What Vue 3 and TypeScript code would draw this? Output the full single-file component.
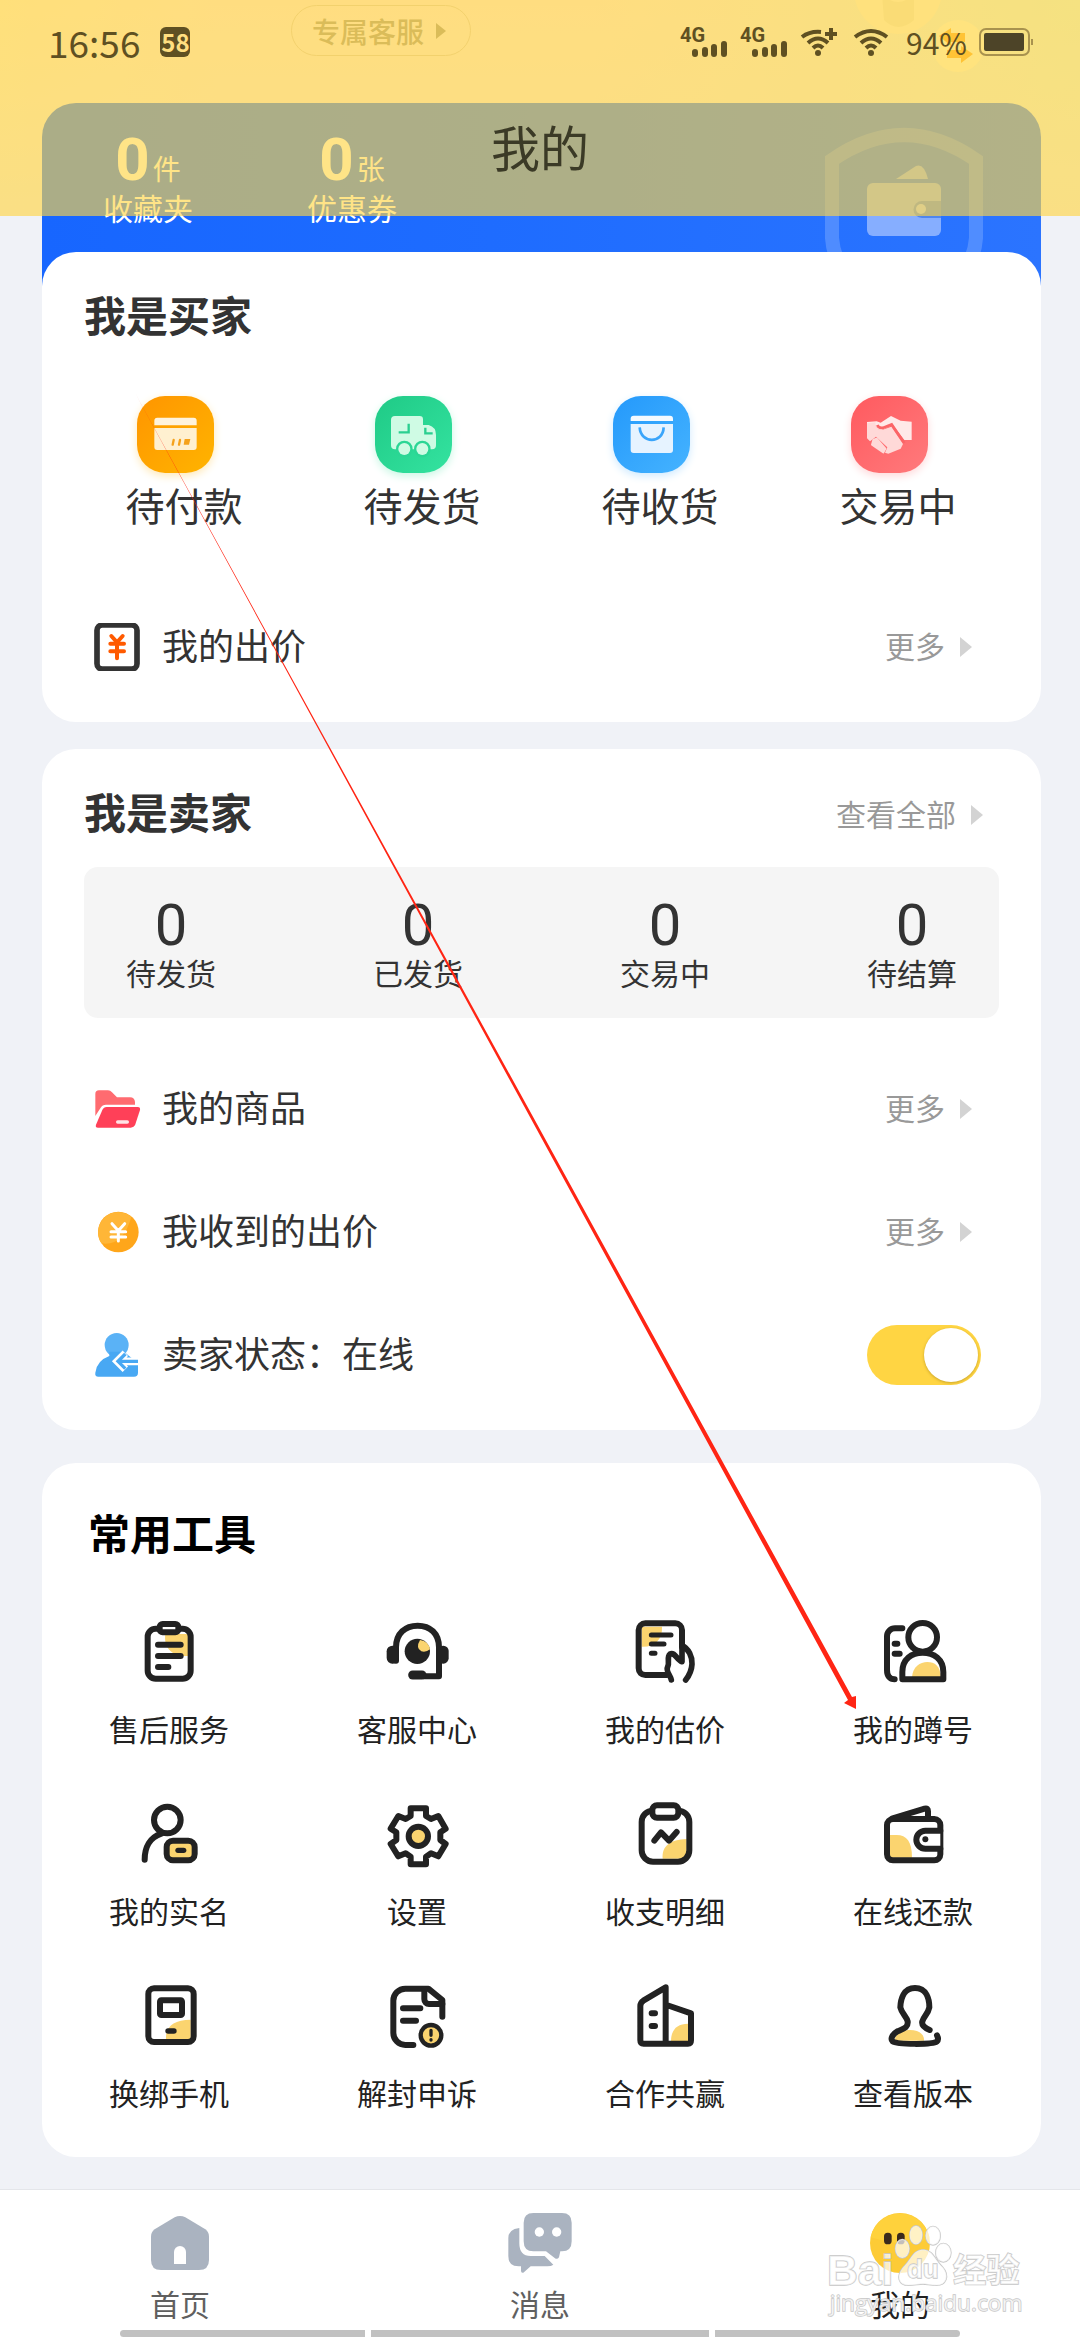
<script setup lang="ts">
import { ref } from 'vue'

interface Icon {
  label: string
  box: string
  art: string
}

const assets = [
  { count: 0, unit: '件', label: '收藏夹' },
  { count: 0, unit: '张', label: '优惠券' },
]

const orders: (Icon & { from: string; to: string; glow: string })[] = [
  {
    label: '待付款', from: '#ff9500', to: '#ffb400', glow: '#ffe9b8', box: '231 78 231 231',
    art: '<path d="M283 166V152q0-9 9-9H401q9 0 9 9V166Z" fill="#fff3dc"/><path d="M283 174H410V231q0 9-9 9H292q-9 0-9-9Z" fill="#fff0d0"/><path d="M341 210l-3 14M360 210l-3 14" stroke="#f5a21b" stroke-width="7" stroke-linecap="round"/><path d="M374 207H391L387 224H371Z" fill="#f5a21b"/>',
  },
  {
    label: '待发货', from: '#1fca86', to: '#34e3a0', glow: '#c9f7e4', box: '945 78 231 231',
    art: '<path d="M1005 138H1079q10 0 10 10V165H1106q22 6 22 30V226q0 12-12 12H1005q-12 0-12-12V150q0-12 12-12Z" fill="#cffbe4"/><circle cx="1033" cy="237" r="25" fill="#2bd695"/><circle cx="1087" cy="237" r="25" fill="#2bd695"/><circle cx="1033" cy="237" r="18" fill="#cffbe4"/><circle cx="1087" cy="237" r="18" fill="#cffbe4"/><path d="M1016 187H1046V161M1096 173V190H1118" fill="none" stroke="#2bcf90" stroke-width="7"/>',
  },
  {
    label: '待收货', from: '#2499fb', to: '#45b3ff', glow: '#cfeaff', box: '158 78 231 231',
    art: '<path d="M211 153V146q0-9 9-9H329q9 0 9 9V153Z" fill="#f4faff"/><path d="M211 162H338V240q0 9-9 9H220q-9 0-9-9Z" fill="#e6f3ff"/><path d="M238 172C241 222 308 222 310 172" fill="none" stroke="#3aa5fb" stroke-width="8"/>',
  },
  {
    label: '交易中', from: '#ff5a5f', to: '#ff7a7c', glow: '#ffd9da', box: '873 78 231 231',
    art: '<path d="M921 156L950 154L962 158L993 138L1022 152L1055 155V210H1033L998 164L965 180Q948 180 946 166L921 185Z" fill="#ffe9e8"/><path d="M921 160L946 157Q946 180 966 180L994 170L1029 222L1022 236L985 251L975 248L982 232L948 200L930 214L921 205Z" fill="#ffd9d8"/><path d="M940 210L950 206L976 236L970 247L936 224Z" fill="#ffd9d8" stroke="#ffd9d8" stroke-width="6" stroke-linejoin="round"/><path d="M952 165Q956 176 970 173L995 163L1033 219" fill="none" stroke="#fb6567" stroke-width="8"/>',
  },
]

const bidIcon =
  '<rect x="111" y="765" width="120" height="132" rx="16" fill="none" stroke="#333" stroke-width="17"/><path d="M154 798L171 817L188 798M171 817V865M151 821H192M151 844H192" fill="none" stroke="#ff5a00" stroke-width="12" stroke-linecap="round"/>'

const counters = ['待发货', '已发货', '交易中', '待结算']

const sellerLinks: Icon[] = [
  {
    label: '我的商品', box: '99 105 144 144',
    art: '<path d="M106 198V132q0-11 11-11H144q7 0 12 6L171 142H210q14 0 15 14V164H138q-11 0-16 9Z" fill="#ff6b70"/><path d="M140 171H233q9 0 7 9L226 223q-4 10-14 10H114q-9 0-6-9L127 180q4-9 13-9Z" fill="#ff4058"/><path d="M173 216H202" stroke="#ffe3e5" stroke-width="10" stroke-linecap="round"/>',
  },
  {
    label: '我收到的出价', box: '99 474 144 144',
    art: '<circle cx="175" cy="546" r="61" fill="#ffa61a"/><path d="M114 546a61 61 0 0 1 100-46Q190 590 124 580Q114 566 114 546" fill="#ffb637"/><path d="M156 521L175 542L194 521M175 542V573M153 545H197M153 561H197" fill="none" stroke="#fff" stroke-width="9" stroke-linecap="round"/>',
  },
]

const onlineIcon =
  '<circle cx="170" cy="885" r="36" fill="#5ab2f6"/><path d="M148 905H192L234 940V968q0 12-12 12H115q-11 0-9-12Q110 932 148 918Z" fill="#48a8f3"/><path d="M236 934H176M196 910L172 934L196 958" fill="none" stroke="#fff" stroke-width="23"/><path d="M234 934H178M196 912L174 934L196 956" fill="none" stroke="#48a8f3" stroke-width="10"/>'

const tools: Icon[] = [
  {
    label: '售后服务', box: '219 78 216 216',
    art: '<path d="M316 132H386V198H372C336 198 310 172 316 132Z" fill="#fbd46f" stroke="none"/><rect x="263" y="116" width="129" height="150" rx="24"/><rect x="299" y="102" width="56" height="25" rx="9" fill="#fff"/><path d="M294 164H362M294 198H362M294 231H325"/>',
  },
  {
    label: '客服中心', box: '963 78 216 216',
    art: '<path d="M1008 212V172C1008 130 1036 107 1073 107S1137 130 1137 172V259H1092"/><path d="M1058 255H1086" stroke-width="27"/><rect x="980" y="167" width="36" height="54" rx="17" fill="#222" stroke="none"/><rect x="1133" y="167" width="33" height="54" rx="16" fill="#222" stroke="none"/><circle cx="1072" cy="184" r="38" fill="#222" stroke="none"/><path d="M1080 150Q1106 154 1110 178Q1098 188 1084 184Q1066 174 1080 150Z" fill="#fbd46f" stroke="none"/>',
  },
  {
    label: '我的估价', box: '207 78 216 216',
    art: '<path d="M245 110H306C308 148 284 172 245 170Z" fill="#fbd46f" stroke="none"/><path d="M320 255H256a20 20 0 0 1-20-20V120a20 20 0 0 1 20-20H346a20 20 0 0 1 20 20V170"/><path d="M274 135H333M274 162H312M274 190H285" stroke-width="15"/><path d="M334 270C332 256 316 244 323 230C330 216 319 202 330 192C344 184 352 212 366 215V166C386 176 397 200 396 222C395 244 388 256 377 270" stroke-width="17"/>',
  },
  {
    label: '我的蹲号', box: '951 78 216 216',
    art: '<path d="M1056 262C1058 230 1080 216 1102 216S1142 228 1142 262Z" fill="#fbd46f" stroke="none"/><circle cx="1088" cy="142" r="43"/><path d="M1027 268V246C1027 207 1055 188 1088 188S1150 207 1150 246V268Z"/><path d="M1027 115H1005a24 24 0 0 0-24 24V240c0 18 8 28 23 28M1004 161H1012M1004 191H1019"/>',
  },
  {
    label: '我的实名', box: '219 624 216 216',
    art: '<circle cx="322" cy="690" r="40"/><path d="M304 731C270 742 254 772 254 809"/><rect x="320" y="752" width="84" height="59" rx="19" fill="#fbd46f"/><path d="M354 781H371" stroke-width="16"/>',
  },
  {
    label: '设置', box: '963 624 216 216',
    art: '<path d="M1052 655H1098V678L1113 687L1135 678L1157 716L1141 727V750L1157 762L1135 799L1113 790L1098 800V823H1052V800L1037 790L1015 799L992 762L1009 750V727L992 716L1015 678L1037 687L1052 678Z"/><circle cx="1075" cy="739" r="29" fill="#fbd46f"/>',
  },
  {
    label: '收支明细', box: '207 624 216 216',
    art: '<path d="M308 806C304 770 330 748 380 747V806Z" fill="#fbd46f" stroke="none"/><rect x="245" y="662" width="143" height="153" rx="34"/><rect x="277" y="646" width="78" height="37" rx="14" fill="#fff"/><path d="M283 752L303 727L327 752L350 726"/>',
  },
  {
    label: '在线还款', box: '951 624 216 216',
    art: '<path d="M989 735H1010C1040 735 1056 755 1056 803H989Z" fill="#fbd46f" stroke="none"/><rect x="981" y="687" width="160" height="124" rx="18"/><path d="M998 685L1094 656Q1104 653 1104 664V685"/><path d="M1141 722H1096a27 27 0 0 0 0 54H1141" fill="#fff"/><circle cx="1096" cy="748" r="9" fill="#222" stroke="none"/>',
  },
  {
    label: '换绑手机', box: '219 90 216 216',
    art: '<path d="M318 268C316 230 340 210 392 209V268Z" fill="#fbd46f" stroke="none"/><rect x="265" y="115" width="136" height="161" rx="17"/><rect x="300" y="151" width="66" height="44" rx="4"/><path d="M324 243H342" stroke-width="16"/>',
  },
  {
    label: '解封申诉', box: '963 90 216 216',
    art: '<path d="M1060 285H1036a36 36 0 0 1-36-36V152a36 36 0 0 1 36-36H1105L1147 150V200"/><path d="M1093 118V148a14 14 0 0 0 14 14H1147M1029 175H1081M1029 212H1068"/><circle cx="1113" cy="256" r="31" fill="#fbd46f" stroke-width="13"/><path d="M1113 241V256M1113 269V270" stroke-width="10"/>',
  },
  {
    label: '合作共赢', box: '207 90 216 216',
    art: '<path d="M333 274C333 240 350 221 384 221V274Z" fill="#fbd46f" stroke="none"/><path d="M317 281V112L250 152Q241 158 241 168V271Q241 281 251 281H384Q393 281 393 271V190L320 165M275 190H285M275 228H285"/>',
  },
  {
    label: '查看版本', box: '951 90 216 216',
    art: '<path d="M1004 272C1006 246 1030 240 1050 240C1078 240 1094 255 1092 272Z" fill="#fbd46f" stroke="none"/><path d="M1109 240C1090 232 1085 222 1087 214C1092 198 1104 192 1108 172C1108 148 1100 114 1065 114S1022 148 1021 172C1025 190 1040 200 1043 214C1045 234 1030 236 1012 244C998 252 990 266 998 274C1012 284 1118 284 1130 275C1136 270 1134 262 1131 256"/>',
  },
]

const tabs: Icon[] = [
  {
    label: '首页', box: '261 777 198 198',
    art: '<path d="M344 802Q360 794 376 802L436 838Q447 846 447 860V930Q447 960 417 960H303Q273 960 273 930V860Q273 846 284 838Z" fill="#aab3c0"/><path d="M342 942V906a18 18 0 0 1 36 0V942Z" fill="#fff"/>',
  },
  {
    label: '消息', box: '1341 777 198 198',
    art: '<path d="M1378 834V880Q1378 918 1412 918H1454L1480 944Q1474 949 1462 949H1412L1390 968Q1383 970 1383 962V949H1376Q1345 949 1345 918V864Q1345 838 1378 834Z" fill="#aab3c0"/><path d="M1420 789H1506Q1535 789 1535 818V874Q1535 904 1506 904H1501L1497 922Q1492 930 1484 924L1458 904H1420Q1391 904 1391 874V818Q1391 789 1420 789Z" fill="#aab3c0"/><circle cx="1438" cy="846" r="14" fill="#fff"/><circle cx="1490" cy="846" r="14" fill="#fff"/>',
  },
  {
    label: '我的', box: '921 777 198 198',
    art: '<circle cx="1020" cy="879" r="90" fill="#fdcb36"/><path d="M932 862a90 90 0 0 1 176 0Q1060 900 932 862Z" fill="#ffd23c"/><rect x="972" y="848" width="23" height="35" rx="11" fill="#3a2a1c"/><rect x="1011" y="848" width="23" height="35" rx="11" fill="#3a2a1c"/>',
  },
]

const online = ref(true)
const activeTab = ref('我的')
</script>

<template>
  <div class="page">
    <header class="topbar">
      <div class="status">
        <div class="status-group">
          <span class="clock">16:56</span>
          <span class="temp">58</span>
        </div>
        <div class="status-group">
          <svg v-for="n in 2" :key="n" class="signal" viewBox="0 0 48 32">
            <text x="0" y="16">4G</text>
            <path d="M15 26V28M25 24V28M34 21V28M44 18V28" />
          </svg>
          <svg class="wifi" viewBox="0 0 38 32">
            <path d="M2 11Q10 5 21 6M8 17Q18 8 28 17M13 22Q18 17 23 22M31 2V14M25 8H37" />
            <circle cx="18" cy="27" r="3" />
          </svg>
          <svg class="wifi" viewBox="0 0 38 32">
            <path d="M2 11Q18 -1 34 11M8 17Q18 8 28 17M13 22Q18 17 23 22" />
            <circle cx="18" cy="27" r="3" />
          </svg>
          <span class="level">94%</span>
          <svg class="battery" viewBox="0 0 54 28">
            <rect x="1" y="1" width="49" height="26" rx="6" />
            <rect class="charge" x="5" y="5" width="40" height="18" rx="2" />
            <path d="M53 11V17" />
          </svg>
        </div>
      </div>
      <h1>我的</h1>
    </header>

    <main>
      <div class="hero">
        <svg class="mascot" viewBox="0 0 190 84" aria-hidden="true">
          <circle cx="69" cy="-10" r="44" fill="#fff6e2" />
          <path d="M53 -6Q69 10 85 -6V20Q69 34 55 20Z" fill="#f1e9cf" />
          <circle cx="129" cy="46" r="26" fill="#fffbe6" />
          <path d="M110 36L122 28V33H136V42H122V46ZM144 54L132 46V50H118V58H132V63Z" fill="#ffa51e" />
        </svg>
        <button type="button" class="service">专属客服<i class="tri"></i></button>
      </div>

      <section class="assets">
        <dl>
          <div v-for="a in assets" :key="a.label" class="asset">
            <dd><b>{{ a.count }}</b>{{ a.unit }}</dd>
            <dt>{{ a.label }}</dt>
          </div>
        </dl>
        <svg class="shield" viewBox="820 120 170 180" aria-hidden="true">
          <path d="M832 160Q904 110 976 160V238Q972 290 904 300Q836 290 832 238Z" fill="none" stroke="#6a9fff" stroke-opacity=".6" stroke-width="14" />
          <path d="M896 179L916 166Q924 163 928 179Z" fill="#86aeff" />
          <rect x="867" y="183" width="74" height="53" rx="6" fill="#86aeff" />
          <path d="M941 201H922a8 8 0 0 0 0 17H941Z" fill="#4f86ee" />
          <circle cx="921" cy="209" r="5" fill="#a9c6ff" />
        </svg>
      </section>

      <section class="card buyer">
        <h2>我是买家</h2>
        <div class="orders">
          <a v-for="o in orders" :key="o.label" href="#" class="order">
            <span class="tile" :style="{ background: `linear-gradient(135deg, ${o.from}, ${o.to})`, boxShadow: `0 3px 8px ${o.glow}` }">
              <svg :viewBox="o.box" v-html="o.art"></svg>
            </span>
            {{ o.label }}
          </a>
        </div>
        <div class="row">
          <svg class="row-icon" viewBox="99 759 144 144" v-html="bidIcon"></svg>
          <span class="row-label">我的出价</span>
          <a href="#" class="more">更多<i class="tri"></i></a>
        </div>
      </section>

      <section class="card seller">
        <div class="card-head">
          <h2>我是卖家</h2>
          <a href="#" class="more">查看全部<i class="tri"></i></a>
        </div>
        <dl class="counters">
          <div v-for="c in counters" :key="c">
            <dd>0</dd>
            <dt>{{ c }}</dt>
          </div>
        </dl>
        <div v-for="l in sellerLinks" :key="l.label" class="row">
          <svg class="row-icon" :viewBox="l.box" v-html="l.art"></svg>
          <span class="row-label">{{ l.label }}</span>
          <a href="#" class="more">更多<i class="tri"></i></a>
        </div>
        <div class="row">
          <svg class="row-icon" viewBox="99 843 144 144" v-html="onlineIcon"></svg>
          <label class="row-label" for="online">卖家状态：{{ online ? '在线' : '离线' }}</label>
          <input id="online" v-model="online" type="checkbox" role="switch" class="switch" />
        </div>
      </section>

      <section class="card tools">
        <h2>常用工具</h2>
        <div class="tool-grid">
          <a v-for="t in tools" :key="t.label" href="#" class="tool">
            <svg :viewBox="t.box" v-html="t.art"></svg>
            {{ t.label }}
          </a>
        </div>
      </section>
    </main>

    <nav class="tabs">
      <a v-for="t in tabs" :key="t.label" href="#" class="tab" :class="{ active: t.label === activeTab }" @click.prevent="activeTab = t.label">
        <svg :viewBox="t.box" v-html="t.art"></svg>
        {{ t.label }}
      </a>
      <div class="gesture"><i></i><i></i><i></i></div>
      <svg class="watermark" viewBox="800 810 600 300">
        <g class="paw">
          <ellipse cx="1067" cy="855" rx="19" ry="28" />
          <ellipse cx="1118" cy="857" rx="22" ry="28" />
          <ellipse cx="1026" cy="896" rx="21" ry="28" />
          <ellipse cx="1149" cy="908" rx="23" ry="28" />
          <path d="M1088 899C1118 899 1124 930 1146 950C1172 980 1154 1006 1130 1006C1110 1006 1100 1002 1088 1002S1060 1006 1044 1006C1016 1006 1004 980 1030 950C1052 930 1058 899 1088 899Z" />
        </g>
        <text class="brand" x="800" y="1004">Bai</text>
        <text class="du" x="1040" y="984">du</text>
        <text class="cn" x="1178" y="995">经验</text>
        <text class="url" x="808" y="1082">jingyan.baidu.com</text>
      </svg>
    </nav>

    <svg class="pointer" viewBox="0 0 1080 2340" aria-hidden="true">
      <path d="M135 393L852 1697L856 1696V1709L844 1703L848 1700Z" />
    </svg>
  </div>
</template>

<style>
body {
  margin: 0;
}
</style>

<style scoped>
.page {
  position: relative;
  display: flex;
  flex-direction: column;
  min-height: 100vh;
  overflow: hidden;
  background: #f0f2f7;
  color: #333;
  font-family: "Noto Sans CJK SC", "Noto Sans", sans-serif;
}
h1, h2, dl, dd, dt {
  margin: 0;
  font-weight: 400;
}
a {
  color: inherit;
  text-decoration: none;
}
svg {
  display: block;
  flex: none;
}

.topbar {
  position: absolute;
  z-index: 2;
  top: 0;
  left: 0;
  right: 0;
  background: rgba(255, 213, 67, 0.64);
}
.status {
  display: flex;
  justify-content: space-between;
  align-items: center;
  height: 84px;
  padding: 0 47px 0 48px;
  color: #5f5022;
}
.status-group {
  display: flex;
  align-items: center;
  gap: 12px;
}
.clock {
  margin-right: 8px;
  font-size: 37px;
  line-height: 36px;
}
.temp {
  width: 30px;
  border-radius: 6px;
  background: #5f5022;
  color: #ffdf80;
  font-size: 24px;
  font-weight: 700;
  line-height: 30px;
  text-align: center;
}
.signal {
  width: 48px;
  height: 32px;
  overflow: visible;
  fill: none;
  stroke: currentColor;
  stroke-width: 6;
  stroke-linecap: round;
}
.signal text {
  fill: currentColor;
  stroke: none;
  font-family: Roboto, sans-serif;
  font-size: 20px;
  font-weight: 700;
}
.wifi {
  width: 38px;
  height: 32px;
  margin-right: 3px;
  fill: none;
  stroke: currentColor;
  stroke-width: 4;
}
.wifi circle {
  fill: currentColor;
  stroke: none;
}
.level {
  font-size: 30px;
  line-height: 36px;
}
.battery {
  width: 54px;
  height: 28px;
  fill: none;
  stroke: #a8924e;
  stroke-width: 2;
}
.battery .charge {
  fill: #4d4428;
  stroke: none;
}
h1 {
  padding-bottom: 8px;
  color: #3b3a26;
  font-size: 49px;
  line-height: 124px;
  text-align: center;
}

main {
  padding: 0 39px 0 42px;
  background: linear-gradient(rgba(240, 242, 247, 0), #f0f2f7 216px), linear-gradient(90deg, #fff3dc, #ffecec 20%, #ffecec 55%, #e2f8ee);
}
.hero {
  position: relative;
  display: flex;
  height: 98px;
  padding: 5px 0 0 249px;
}
.mascot {
  position: absolute;
  top: 0;
  right: 22px;
  width: 190px;
  height: 84px;
}
.service {
  display: flex;
  align-items: center;
  gap: 12px;
  height: 51px;
  padding: 0 24px 0 20px;
  border: 1px solid #dccbb8;
  border-radius: 26px;
  background: none;
  color: #9a9080;
  font: 500 28px/36px "Noto Sans CJK SC", sans-serif;
}
.tri {
  width: 0;
  border: solid transparent;
  border-width: 10px 0 10px 12px;
  border-left-color: #d3d3d3;
}
.service .tri {
  border-width: 8px 0 8px 10px;
  border-left-color: #9a9080;
}

.assets {
  display: flex;
  justify-content: space-between;
  height: 197px;
  border-radius: 34px 34px 0 0;
  background: linear-gradient(90deg, #1766ff, #1e6cff 45%, #2b74ff);
  color: #fff;
}
.assets dl {
  display: flex;
  padding: 24px 0 0 4px;
}
.asset {
  width: 204px;
  text-align: center;
}
.asset dd {
  display: flex;
  align-items: baseline;
  justify-content: center;
  gap: 3px;
  height: 62px;
  font-size: 28px;
  line-height: 36px;
}
.asset b {
  font-family: Roboto, sans-serif;
  font-size: 60px;
  line-height: 66px;
}
.asset dt {
  font-size: 30px;
  line-height: 36px;
}
.shield {
  width: 170px;
  height: 180px;
  margin: 17px 51px 0 0;
}

.card {
  border-radius: 34px;
  background: #fff;
}
.card h2 {
  font-size: 42px;
  font-weight: 700;
  line-height: 60px;
}
.buyer {
  position: relative;
  margin-top: -48px;
  padding: 32px 0 14px;
}
.buyer h2 {
  padding-left: 42px;
}
.orders {
  display: grid;
  grid-template-columns: repeat(4, 1fr);
  margin: 52px 24px 56px 23px;
}
.order {
  display: flex;
  flex-direction: column;
  align-items: center;
  gap: 6px;
  font-size: 39px;
  line-height: 50px;
}
.tile {
  width: 77px;
  height: 77px;
  margin-right: 18px;
  border-radius: 28px;
}
.row {
  display: flex;
  align-items: center;
  height: 123px;
  padding: 0 60px 0 51px;
}
.row-icon {
  width: 48px;
  height: 48px;
  margin-right: 21px;
}
.row-label {
  flex: 1;
  padding-bottom: 5px;
  font-size: 36px;
  line-height: 48px;
}
.more {
  display: flex;
  align-items: center;
  gap: 15px;
  color: #999;
  font-size: 30px;
  line-height: 36px;
}
.more .tri {
  margin-top: 4px;
}
.row .more {
  padding: 0 9px 4px 0;
}

.seller {
  margin-top: 27px;
  padding: 32px 0 14px;
}
.card-head {
  display: flex;
  align-items: center;
  justify-content: space-between;
  padding: 0 58px 0 42px;
}
.card-head .more {
  padding-top: 4px;
}
.counters {
  display: flex;
  justify-content: space-between;
  margin: 26px 42px 29px;
  padding: 29px 42px 28px;
  border-radius: 14px;
  background: #f5f5f5;
  text-align: center;
}
.counters dd {
  font-family: Roboto, sans-serif;
  font-size: 58px;
  line-height: 58px;
}
.counters dt {
  font-size: 30px;
  line-height: 36px;
}
.switch {
  position: relative;
  appearance: none;
  width: 114px;
  height: 60px;
  margin: 0;
  border-radius: 30px;
  background: #ccc;
}
.switch::before {
  content: "";
  position: absolute;
  top: 3px;
  left: 3px;
  width: 54px;
  height: 54px;
  border-radius: 50%;
  background: #fff;
  box-shadow: 0 1px 3px rgba(120, 90, 0, 0.4);
}
.switch:checked {
  background: #ffd543;
}
.switch:checked::before {
  left: 57px;
}

.tools {
  margin-top: 33px;
  padding: 39px 4px 43px 3px;
}
.tools h2 {
  padding-left: 43px;
  color: #000;
}
.tool-grid {
  display: grid;
  grid-template-columns: repeat(4, 1fr);
  row-gap: 48px;
  margin-top: 54px;
}
.tool {
  display: flex;
  flex-direction: column;
  align-items: center;
  gap: 18px;
  color: #222;
  font-size: 30px;
  line-height: 44px;
}
.tool svg {
  width: 72px;
  height: 72px;
  fill: none;
  stroke: #222;
  stroke-width: 18px;
  stroke-linecap: round;
  stroke-linejoin: round;
}

.tabs {
  position: relative;
  display: flex;
  height: 150px;
  margin-top: 32px;
  border-top: 1px solid #e4e6ea;
  background: #fff;
}
.tab {
  display: flex;
  flex: 1;
  flex-direction: column;
  align-items: center;
  gap: 10px;
  padding-top: 19px;
  color: #606060;
  font-size: 30px;
  line-height: 36px;
}
.tab.active {
  color: #222;
}
.tab svg {
  width: 66px;
  height: 66px;
}
.gesture {
  position: absolute;
  right: 120px;
  bottom: 3px;
  left: 120px;
  display: flex;
  gap: 6px;
}
.gesture i {
  flex: 245;
  height: 7px;
  background: #c1c1c1;
}
.gesture i:first-child {
  border-radius: 4px 0 0 4px;
}
.gesture i:nth-child(2) {
  flex: 338;
}
.gesture i:last-child {
  border-radius: 0 4px 4px 0;
}
.watermark {
  position: absolute;
  right: 53px;
  bottom: 20px;
  width: 200px;
  height: 100px;
  fill: rgba(255, 255, 255, 0.7);
  stroke: #c6c6c6;
  stroke-width: 4px;
  paint-order: stroke;
  font-family: "Liberation Sans", "Noto Sans CJK SC", sans-serif;
  font-weight: 700;
  pointer-events: none;
}
.brand {
  font-size: 128px;
}
.cn {
  font-family: "Noto Sans CJK SC", sans-serif;
  font-size: 100px;
}
.du {
  font-size: 78px;
}
.url {
  font-family: "Open Sans", sans-serif;
  font-size: 68px;
  font-weight: 400;
}
.pointer {
  position: absolute;
  z-index: 3;
  top: 0;
  left: 0;
  width: 100%;
  fill: #ff2514;
  pointer-events: none;
}
</style>
